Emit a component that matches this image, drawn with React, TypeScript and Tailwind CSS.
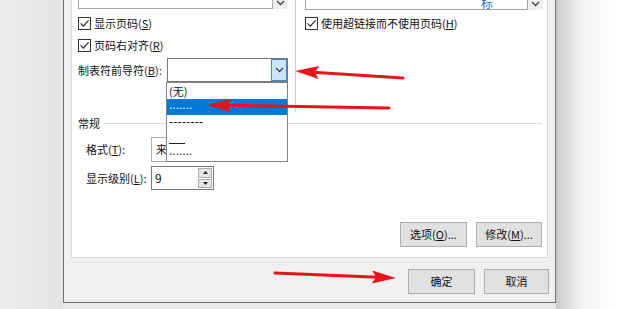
import type { ReactNode } from 'react'

type Pt = [number, number]

function arrowPoints(tail: Pt, tip: Pt, headLen = 24, headHalf = 6.5) {
  const dx = tip[0] - tail[0]
  const dy = tip[1] - tail[1]
  const len = Math.hypot(dx, dy)
  const ux = dx / len
  const uy = dy / len
  const bx = tip[0] - ux * headLen
  const by = tip[1] - uy * headLen
  const px = -uy
  const py = ux
  const head = [
    [tip[0], tip[1]],
    [bx + px * headHalf, by + py * headHalf],
    [bx + ux * 4, by + uy * 4],
    [bx - px * headHalf, by - py * headHalf],
  ]
  return {
    head: head.map((p) => p.join(',')).join(' '),
    shaft: { x1: tail[0], y1: tail[1], x2: bx + ux * 6, y2: by + uy * 6 },
  }
}

const arrows: { tail: Pt; tip: Pt }[] = [
  { tail: [403, 78], tip: [295, 71] },
  { tail: [389, 108], tip: [207, 105] },
  { tail: [275, 273], tip: [396, 278] },
]

function Check() {
  return (
    <span className="flex h-[13px] w-[13px] shrink-0 items-center justify-center border border-[#333] bg-white">
      <svg width="11" height="11" viewBox="0 0 11 11">
        <path d="M1.6 5.4 L4.3 8.1 L9.6 2.4" fill="none" stroke="#222" strokeWidth="1.1" />
      </svg>
    </span>
  )
}

function Chevron() {
  return (
    <svg width="9" height="6" viewBox="0 0 9 6">
      <path d="M1 1 L4.5 4.5 L8 1" fill="none" stroke="#444" strokeWidth="1.4" />
    </svg>
  )
}

function CheckRow({ children }: { children: ReactNode }) {
  return (
    <div className="flex h-[13px] items-center gap-[3px] leading-none">
      <Check />
      <span>{children}</span>
    </div>
  )
}

function Btn({ w, children }: { w: string; children: ReactNode }) {
  return (
    <div className={`flex h-[25px] ${w} items-center justify-center border border-[#adadad] bg-[#e1e1e1]`}>
      {children}
    </div>
  )
}

export default function App() {
  return (
    <div className="relative flex h-[309px] w-[620px] overflow-hidden bg-[#e9e9e9] font-['Noto_Sans_CJK_SC',sans-serif] text-[11px] text-[#111]">
      <div className="w-[63px] shrink-0 bg-linear-to-r from-[#ececec] to-[#e3e3e3]" />

      {/* dialog */}
      <div className="flex h-[303px] w-[493px] shrink-0 flex-col border-r border-b border-l border-[#6f6f6f] bg-[#f0f0f0]">
        <div className="ml-[7px] mr-[7px] flex h-[258px] flex-col overflow-hidden border-r border-b border-l border-[#d9d9d9] bg-white">
          {/* previews */}
          <div className="flex h-[112px]">
            <div className="flex w-[224px] flex-col border-r border-[#cfcfcf] pl-[6px]">
              <div className="-mt-[20px] flex h-[29px]">
                <div className="w-[195px] border border-[#a8a8a8] bg-white" />
                <div className="flex w-[15px] items-end justify-center bg-[#f0f0f0] pb-[3px]">
                  <Chevron />
                </div>
              </div>
              <div className="mt-[8px]">
                <CheckRow>
                  显示页码(<u>S</u>)
                </CheckRow>
              </div>
              <div className="mt-[9px]">
                <CheckRow>
                  页码右对齐(<u>R</u>)
                </CheckRow>
              </div>
              <div className="mt-[6px] flex h-[24px] items-center">
                <span className="w-[89px]">
                  制表符前导符(<u>B</u>):
                </span>
                <div className="flex h-[24px] w-[121px] border border-[#7a7a7a] bg-white">
                  <div className="flex-1" />
                  <div className="flex w-[16px] items-center justify-center border border-[#3c8ad6] bg-[#cce4f7]">
                    <Chevron />
                  </div>
                </div>
              </div>
            </div>

            <div className="flex flex-1 flex-col pl-[9px]">
              <div className="-mt-[20px] flex h-[30px]">
                <div className="flex w-[223px] items-end justify-end border border-[#a8a8a8] bg-white pr-[34px] leading-none">
                  <span className="text-[12px] text-[#1d6fd1]">标</span>
                </div>
                <div className="flex w-[15px] items-end justify-center bg-[#f0f0f0] pb-[3px]">
                  <Chevron />
                </div>
              </div>
              <div className="mt-[7px]">
                <CheckRow>
                  使用超链接而不使用页码(<u>H</u>)
                </CheckRow>
              </div>
            </div>
          </div>

          {/* general */}
          <div className="mt-[4px] flex h-[14px] items-center pl-[6px]">
            <span>常规</span>
            <div className="ml-[4px] mr-[5px] h-px flex-1 bg-[#dcdcdc]" />
          </div>
          <div className="mt-[7px] flex h-[25px] items-center pl-[14px]">
            <span className="w-[65px]">
              格式(<u>T</u>):
            </span>
            <div className="flex h-[25px] w-[130px] items-center border border-[#adadad] bg-white pl-[4px]">
              来自模板
            </div>
          </div>
          <div className="mt-[4px] flex h-[24px] items-center pl-[14px]">
            <span className="w-[65px]">
              显示级别(<u>L</u>):
            </span>
            <div className="flex h-[24px] w-[63px] border border-[#7a7a7a] bg-white">
              <span className="flex flex-1 items-center pl-[3px] text-[12px]">9</span>
              <div className="my-px mr-px flex w-[14px] flex-col gap-px">
                <div className="flex flex-1 items-center justify-center border border-[#adadad] bg-[#e6e6e6]">
                  <svg width="5" height="3" viewBox="0 0 5 3">
                    <path d="M0 3 L2.5 0 L5 3Z" fill="#222" />
                  </svg>
                </div>
                <div className="flex flex-1 items-center justify-center border border-[#adadad] bg-[#e6e6e6]">
                  <svg width="5" height="3" viewBox="0 0 5 3">
                    <path d="M0 0 L2.5 3 L5 0Z" fill="#222" />
                  </svg>
                </div>
              </div>
            </div>
          </div>

          <div className="mt-[32px] mr-[5px] flex justify-end gap-[9px]">
            <Btn w="w-[67px]">
              选项(<u>O</u>)...
            </Btn>
            <Btn w="w-[66px]">
              修改(<u>M</u>)...
            </Btn>
          </div>
        </div>

        <div className="mt-[11px] mr-[6px] flex justify-end gap-[9px]">
          <Btn w="w-[67px]">确定</Btn>
          <Btn w="w-[65px]">取消</Btn>
        </div>
      </div>

      <div className="flex-1 bg-linear-to-r from-[#c9c9c9] via-[#f4f4f4] via-40% to-white" />

      {/* open dropdown list */}
      <div className="absolute left-[166px] top-[82px] flex h-[80px] w-[122px] flex-col border border-[#828282] bg-white font-['Liberation_Sans',sans-serif] text-[12px] leading-none">
        <div className="flex h-[16px] items-center pl-[2px] font-['Noto_Sans_CJK_SC',sans-serif] text-[11px]">(无)</div>
        <div className="flex h-[16px] items-center bg-[#0078d7] pl-[2px] text-white">
          <span className="-mt-[4px]">.......</span>
        </div>
        <div className="flex h-[16px] items-center pl-[2px]">
          <span className="-mt-[2px] tracking-[0.3px]">--------</span>
        </div>
        <div className="flex flex-1 flex-col pl-[2px] pt-[12px]">
          <div className="h-px w-[16px] bg-[#222]" />
          <span className="mt-[1px]">.......</span>
        </div>
      </div>

      {/* annotation arrows */}
      <svg className="pointer-events-none absolute inset-0" width="620" height="309" viewBox="0 0 620 309">
        {arrows.map((a, i) => {
          const p = arrowPoints(a.tail, a.tip)
          return (
            <g key={i}>
              <line {...p.shaft} stroke="#e8141c" strokeWidth="3" strokeLinecap="round" />
              <polygon points={p.head} fill="#e8141c" />
            </g>
          )
        })}
      </svg>
    </div>
  )
}
